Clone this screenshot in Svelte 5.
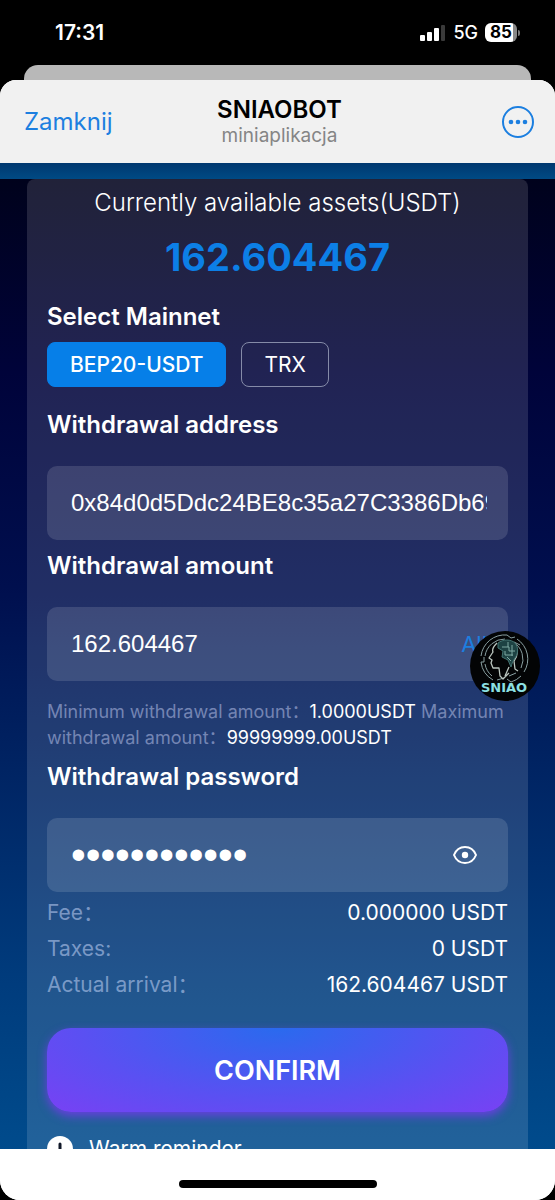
<script lang="ts">
    type Network = { id: string; label: string };

    const networks: Network[] = [
        { id: "bep20", label: "BEP20-USDT" },
        { id: "trx", label: "TRX" },
    ];

    const balance = "162.604467";

    let network = $state("bep20");
    let address = $state("0x84d0d5Ddc24BE8c35a27C3386Db69");
    let amount = $state(balance);
    let password = $state("withdraw2024");
    let showPassword = $state(false);

    let summary = $derived([
        { label: "Fee：", value: "0.000000 USDT" },
        { label: "Taxes:", value: "0 USDT" },
        { label: "Actual arrival：", value: `${amount} USDT` },
    ]);
</script>

<div class="phone">
    <div class="status-bar">
        <span class="time">17:31</span>
        <div class="status-icons">
            <svg class="signal" viewBox="0 0 26 16" aria-hidden="true">
                <rect x="0" y="10" width="5" height="6" rx="1" fill="#fff" />
                <rect x="7" y="7" width="5" height="9" rx="1" fill="#fff" />
                <rect x="14" y="3" width="5" height="13" rx="1" fill="#fff" />
                <rect x="21" y="0" width="4" height="16" rx="1" fill="#3a3a3a" />
            </svg>
            <span class="carrier">5G</span>
            <span class="battery">85</span>
        </div>
    </div>

    <div class="back-sheet"></div>

    <div class="sheet">
        <header class="app-header">
            <button class="close-btn">Zamknij</button>
            <div class="app-title">
                <h1>SNIAOBOT</h1>
                <p>miniaplikacja</p>
            </div>
            <button class="more-btn" aria-label="More">
                <svg viewBox="0 0 34 34" fill="none">
                    <circle cx="17" cy="17" r="15" stroke="currentColor" stroke-width="2" />
                    <circle cx="10" cy="17" r="2.3" fill="currentColor" />
                    <circle cx="17" cy="17" r="2.3" fill="currentColor" />
                    <circle cx="24" cy="17" r="2.3" fill="currentColor" />
                </svg>
            </button>
        </header>

        <div class="nav-strip"></div>

        <main class="content">
            <div class="card">
                <p class="balance-label">Currently available assets(USDT)</p>
                <p class="balance">{balance}</p>

                <h2 class="field-label">Select Mainnet</h2>
                <div class="networks">
                    {#each networks as item}
                        <button
                            class="network"
                            class:is-active={item.id === network}
                            onclick={() => (network = item.id)}
                        >
                            {item.label}
                        </button>
                    {/each}
                </div>

                <label class="field-label" for="address">Withdrawal address</label>
                <div class="field">
                    <input id="address" class="plain" type="text" bind:value={address} />
                </div>

                <label class="field-label" for="amount">Withdrawal amount</label>
                <div class="field">
                    <input id="amount" class="plain" type="text" inputmode="decimal" bind:value={amount} />
                    <button class="all-btn" onclick={() => (amount = balance)}>All</button>
                    <a class="float-logo" href="#home" aria-label="Home">
                        <svg viewBox="0 0 72 72" fill="none">
                            <circle cx="36" cy="36" r="35" fill="#030405" />
                            <g stroke="#8aa0a2" stroke-width="1">
                                <path d="M24 50a24 24 0 0 1-12-18M12 26a24 24 0 0 1 26-21l4 3 4-1M48 9a24 24 0 0 1 7 33M52 46a24 24 0 0 1-10 6l-4-3" />
                                <path d="M23 46a20 20 0 0 1-7-12M16 26a20 20 0 0 1 20-17M44 12a20 20 0 0 1 8 26" />
                                <path d="M12 32h3v-5M28 50l7-2M45 12l6 3M40 46l7-3" />
                            </g>
                            <path
                                d="M28 13c-4 4-5 7-4 9l-4 6 3 2-1 3 2 5h6l1 8 3 3 6-6M48 19c1 5 0 8-3 12l1 8 3 2M36 46l4-9"
                                stroke="#b9c4be"
                                stroke-width="1.3"
                                stroke-linejoin="round"
                            />
                            <path
                                d="M29 13c5-4 13-4 17 0 4 5 3 11 0 15-2 3-3 5-4 9l-3-7-6-3 1-6-5-3z"
                                fill="#1d4243"
                                stroke="#437371"
                            />
                            <path
                                d="M33 17h7v4h6M36 21v4h8M39 12v5M43 15v11M38 27l4 4"
                                stroke="#7fa9a3"
                            />
                            <text class="logo-text" x="35" y="62" text-anchor="middle">SNIAO</text>
                        </svg>
                    </a>
                </div>

                <p class="limits">
                    Minimum withdrawal amount：<strong>1.0000USDT</strong> Maximum withdrawal
                    amount：<strong>99999999.00USDT</strong>
                </p>

                <label class="field-label" for="password">Withdrawal password</label>
                <div class="field">
                    <input
                        id="password"
                        class="secret"
                        type={showPassword ? "text" : "password"}
                        bind:value={password}
                    />
                    <button
                        class="eye-btn"
                        aria-label="Show password"
                        onclick={() => (showPassword = !showPassword)}
                    >
                        <svg viewBox="0 0 26 20" fill="none">
                            <path
                                d="M2 10c2-5 6-8 11-8s9 3 11 8c-2 5-6 8-11 8s-9-3-11-8z"
                                stroke="currentColor"
                                stroke-width="2"
                            />
                            <circle cx="13" cy="10" r="3.2" fill="currentColor" />
                        </svg>
                    </button>
                </div>

                <dl class="summary">
                    {#each summary as row}
                        <div class="summary-row">
                            <dt>{row.label}</dt>
                            <dd>{row.value}</dd>
                        </div>
                    {/each}
                </dl>

                <button class="confirm">CONFIRM</button>

                <div class="reminder">
                    <svg viewBox="0 0 26 26" aria-hidden="true">
                        <circle cx="13" cy="13" r="13" fill="#fff" />
                        <path d="M13 8v6M13 18v2" stroke="#101828" stroke-width="3" stroke-linecap="round" />
                    </svg>
                    <span>Warm reminder</span>
                </div>
            </div>
        </main>

        <footer class="home-area">
            <div class="home-bar"></div>
        </footer>
    </div>
</div>

<style>
    :global(body) {
        margin: 0;
        background: #000;
    }

    .phone {
        height: 100vh;
        display: flex;
        flex-direction: column;
        overflow: hidden;
        background: #000;
        color: #fff;
        font-family: Inter, "Noto Sans CJK SC", sans-serif;
    }

    button {
        padding: 0;
        border: none;
        background: none;
        color: inherit;
        font: inherit;
        cursor: pointer;
    }

    h1,
    h2,
    p,
    dl,
    dd {
        margin: 0;
    }

    svg {
        display: block;
    }

    .status-bar {
        display: flex;
        align-items: center;
        justify-content: space-between;
        flex-shrink: 0;
        height: 65px;
        padding: 0 38px 0 55px;
    }

    .time {
        font-size: 21px;
        font-weight: 600;
    }

    .status-icons {
        display: flex;
        align-items: center;
        gap: 7px;
    }

    .signal {
        width: 26px;
        height: 16px;
    }

    .carrier {
        font-size: 18px;
        font-weight: 500;
    }

    .battery {
        position: relative;
        width: 32px;
        border-radius: 6px;
        background: linear-gradient(90deg, #fff 86%, #888 86%);
        color: #000;
        font-size: 17px;
        line-height: 19px;
        font-weight: 700;
        text-align: center;
    }

    .battery::after {
        content: "";
        position: absolute;
        top: 7px;
        right: -3px;
        width: 2px;
        height: 6px;
        border-radius: 0 2px 2px 0;
        background: #777;
    }

    .back-sheet {
        flex-shrink: 0;
        height: 15px;
        margin: 0 24px;
        border-radius: 14px 14px 0 0;
        background: #b8b8b8;
    }

    .sheet {
        flex: 1;
        min-height: 0;
        display: flex;
        flex-direction: column;
        border-radius: 16px 16px 20px 20px;
        overflow: hidden;
        background: #fff;
    }

    .app-header {
        display: grid;
        grid-template-columns: 1fr auto 1fr;
        align-items: center;
        flex-shrink: 0;
        height: 83px;
        padding: 0 20px 0 24px;
        background: #f1f1f1;
        color: #000;
    }

    .close-btn {
        justify-self: start;
        color: #1c7fe0;
        font-size: 24px;
    }

    .app-title {
        text-align: center;
    }

    .app-title h1 {
        font-size: 24px;
        line-height: 28px;
        font-weight: 600;
    }

    .app-title p {
        color: #858585;
        font-size: 19px;
        line-height: 24px;
    }

    .more-btn {
        justify-self: end;
        color: #1c7fe0;
    }

    .more-btn svg {
        width: 34px;
        height: 34px;
    }

    .nav-strip {
        flex-shrink: 0;
        height: 16px;
        background: linear-gradient(#00386f, #004a84);
    }

    .content {
        flex: 1;
        min-height: 0;
        overflow: hidden;
        padding: 0 27px;
        background: linear-gradient(#00021c, #00033a 20%, #000f4e 42%, #002362 60%, #003b7c 82%, #004b8c);
    }

    .card {
        display: flow-root;
        padding: 8px 20px 20px;
        border-radius: 8px;
        background: rgba(255, 255, 255, 0.13);
    }

    .balance-label {
        font-size: 24px;
        line-height: 32px;
        font-weight: 300;
        text-align: center;
    }

    .balance {
        margin: 14px 0 20px;
        color: #0c7fe6;
        font-size: 38px;
        line-height: 48px;
        font-weight: 700;
        text-align: center;
    }

    .field-label {
        display: block;
        font-size: 24px;
        line-height: 32px;
        font-weight: 600;
    }

    .networks {
        display: flex;
        gap: 15px;
        margin: 9px 0 22px;
    }

    .network {
        padding: 0 22px;
        border: 1px solid #858ba8;
        border-radius: 8px;
        font-size: 21px;
        line-height: 43px;
    }

    .network.is-active {
        border-color: #067fe8;
        background: #067fe8;
        font-weight: 500;
    }

    .field {
        position: relative;
        display: flex;
        align-items: center;
        height: 74px;
        margin-top: 25px;
        padding: 0 21px 0 24px;
        border-radius: 10px;
        background: rgba(255, 255, 255, 0.13);
    }

    .field + .field-label,
    .limits + .field-label {
        margin-top: 10px;
    }

    .field input {
        flex: 1;
        min-width: 0;
        height: 48px;
        padding: 0;
        border: none;
        outline: none;
        background: none;
        color: #fff;
        font-family: "Liberation Sans", Arial, sans-serif;
    }

    .field .plain {
        font-size: 24px;
    }

    .field .secret {
        font-size: 42px;
    }

    .all-btn {
        color: #1c7fe0;
        font-size: 22px;
    }

    .float-logo {
        position: absolute;
        top: 23px;
        right: -33px;
    }

    .float-logo svg {
        width: 72px;
        height: 72px;
    }

    .logo-text {
        fill: #8ce0e2;
        font-family: "DejaVu Sans", sans-serif;
        font-size: 13px;
        font-weight: 700;
    }

    .limits {
        margin-top: 18px;
        color: rgba(200, 208, 245, 0.5);
        font-size: 18px;
        line-height: 26px;
    }

    .limits strong {
        color: #fff;
        font-weight: 400;
    }

    .eye-btn svg {
        width: 26px;
        height: 20px;
        margin-right: 9px;
    }

    .summary {
        margin-top: 3px;
    }

    .summary-row {
        display: flex;
        justify-content: space-between;
        font-size: 21px;
        line-height: 36px;
    }

    .summary-row dt {
        color: rgba(200, 215, 250, 0.55);
    }

    .confirm {
        display: block;
        width: 100%;
        height: 84px;
        margin: 25px 0 24px;
        border-radius: 24px;
        background: radial-gradient(ellipse at 50% 0, #2a6aee, #5a50f2 60%, #7841f4);
        box-shadow: 0 4px 10px #6a3fe0;
        font-size: 27px;
        font-weight: 600;
    }

    .reminder {
        display: flex;
        align-items: center;
        gap: 16px;
        font-size: 21px;
        line-height: 26px;
    }

    .reminder svg {
        width: 26px;
        height: 26px;
    }

    .home-area {
        display: flex;
        justify-content: center;
        align-items: flex-end;
        flex-shrink: 0;
        height: 51px;
        background: #fff;
    }

    .home-bar {
        width: 198px;
        height: 8px;
        margin-bottom: 12px;
        border-radius: 4px;
        background: #000;
    }
</style>
